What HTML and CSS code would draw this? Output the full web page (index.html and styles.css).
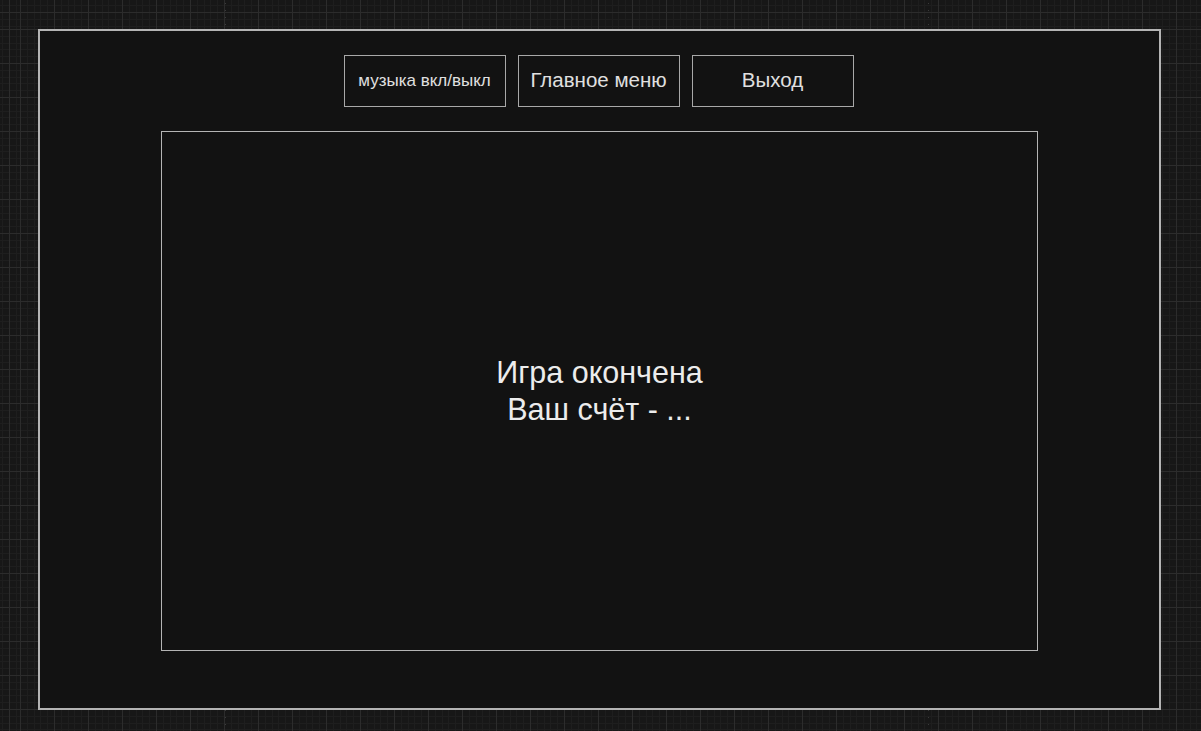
FILE: index.html
```html
<!DOCTYPE html>
<html lang="ru">
<head>
<meta charset="utf-8">
<title>Игра окончена</title>
<link rel="stylesheet" href="styles.css">
</head>
<body>
<div class="frame">
  <div class="toolbar">
    <button class="btn btn-small">музыка вкл/выкл</button>
    <button class="btn">Главное меню</button>
    <button class="btn">Выход</button>
  </div>
  <div class="board">
    <p class="message">Игра окончена<br>Ваш счёт - ...</p>
  </div>
</div>
</body>
</html>
```
FILE: styles.css
```css
html, body {
  margin: 0;
  padding: 0;
  height: 100%;
}
body {
  background-color: #171717;
  background-image:
    repeating-linear-gradient(to bottom, transparent 0 3px, #3a3a3a 3px 4px, transparent 4px 7px),
    repeating-linear-gradient(to bottom, transparent 0 3px, #3a3a3a 3px 4px, transparent 4px 7px),
    repeating-linear-gradient(to right, #2c2c2c 0 1px, transparent 1px 34px),
    repeating-linear-gradient(to bottom, #2c2c2c 0 1px, transparent 1px 34px),
    repeating-linear-gradient(to right, #1e1e1e 0 1px, transparent 1px 6.8px),
    repeating-linear-gradient(to bottom, #1e1e1e 0 1px, transparent 1px 6.8px);
  background-size: 1px 100%, 1px 100%, 100% 100%, 100% 100%, 100% 100%, 100% 100%;
  background-position: 225px 0, 928px 0, 20px 0, 0 29px, 20px 0, 0 29px;
  background-repeat: no-repeat, no-repeat, repeat, repeat, repeat, repeat;
  font-family: "Liberation Sans", Arial, sans-serif;
  padding-top: 29px;
  box-sizing: border-box;
}
.frame {
  margin-left: 38px;
  width: 1123px;
  height: 681px;
  box-sizing: border-box;
  border: 2px solid #b4b4b4;
  background: #121212;
  padding: 24px 2px 0 0;
  display: flex;
  flex-direction: column;
  align-items: center;
}
.toolbar {
  display: flex;
  gap: 12px;
}
.btn {
  width: 162px;
  height: 52px;
  box-sizing: border-box;
  border: 1px solid #a8a8a8;
  background: #121212;
  color: #e0e0e0;
  font-family: "Liberation Sans", Arial, sans-serif;
  font-size: 20.5px;
  padding: 0 0 2px;
  margin: 0;
}
.btn-small {
  font-size: 17px;
  padding-top: 2px;
}
.board {
  margin: 24px 0 0 2px;
  width: 877px;
  height: 520px;
  box-sizing: border-box;
  border: 1px solid #b4b4b4;
  display: flex;
  align-items: center;
  justify-content: center;
}
.message {
  margin: 0;
  text-align: center;
  color: #ececec;
  font-size: 30.5px;
  line-height: 37px;
}
```
